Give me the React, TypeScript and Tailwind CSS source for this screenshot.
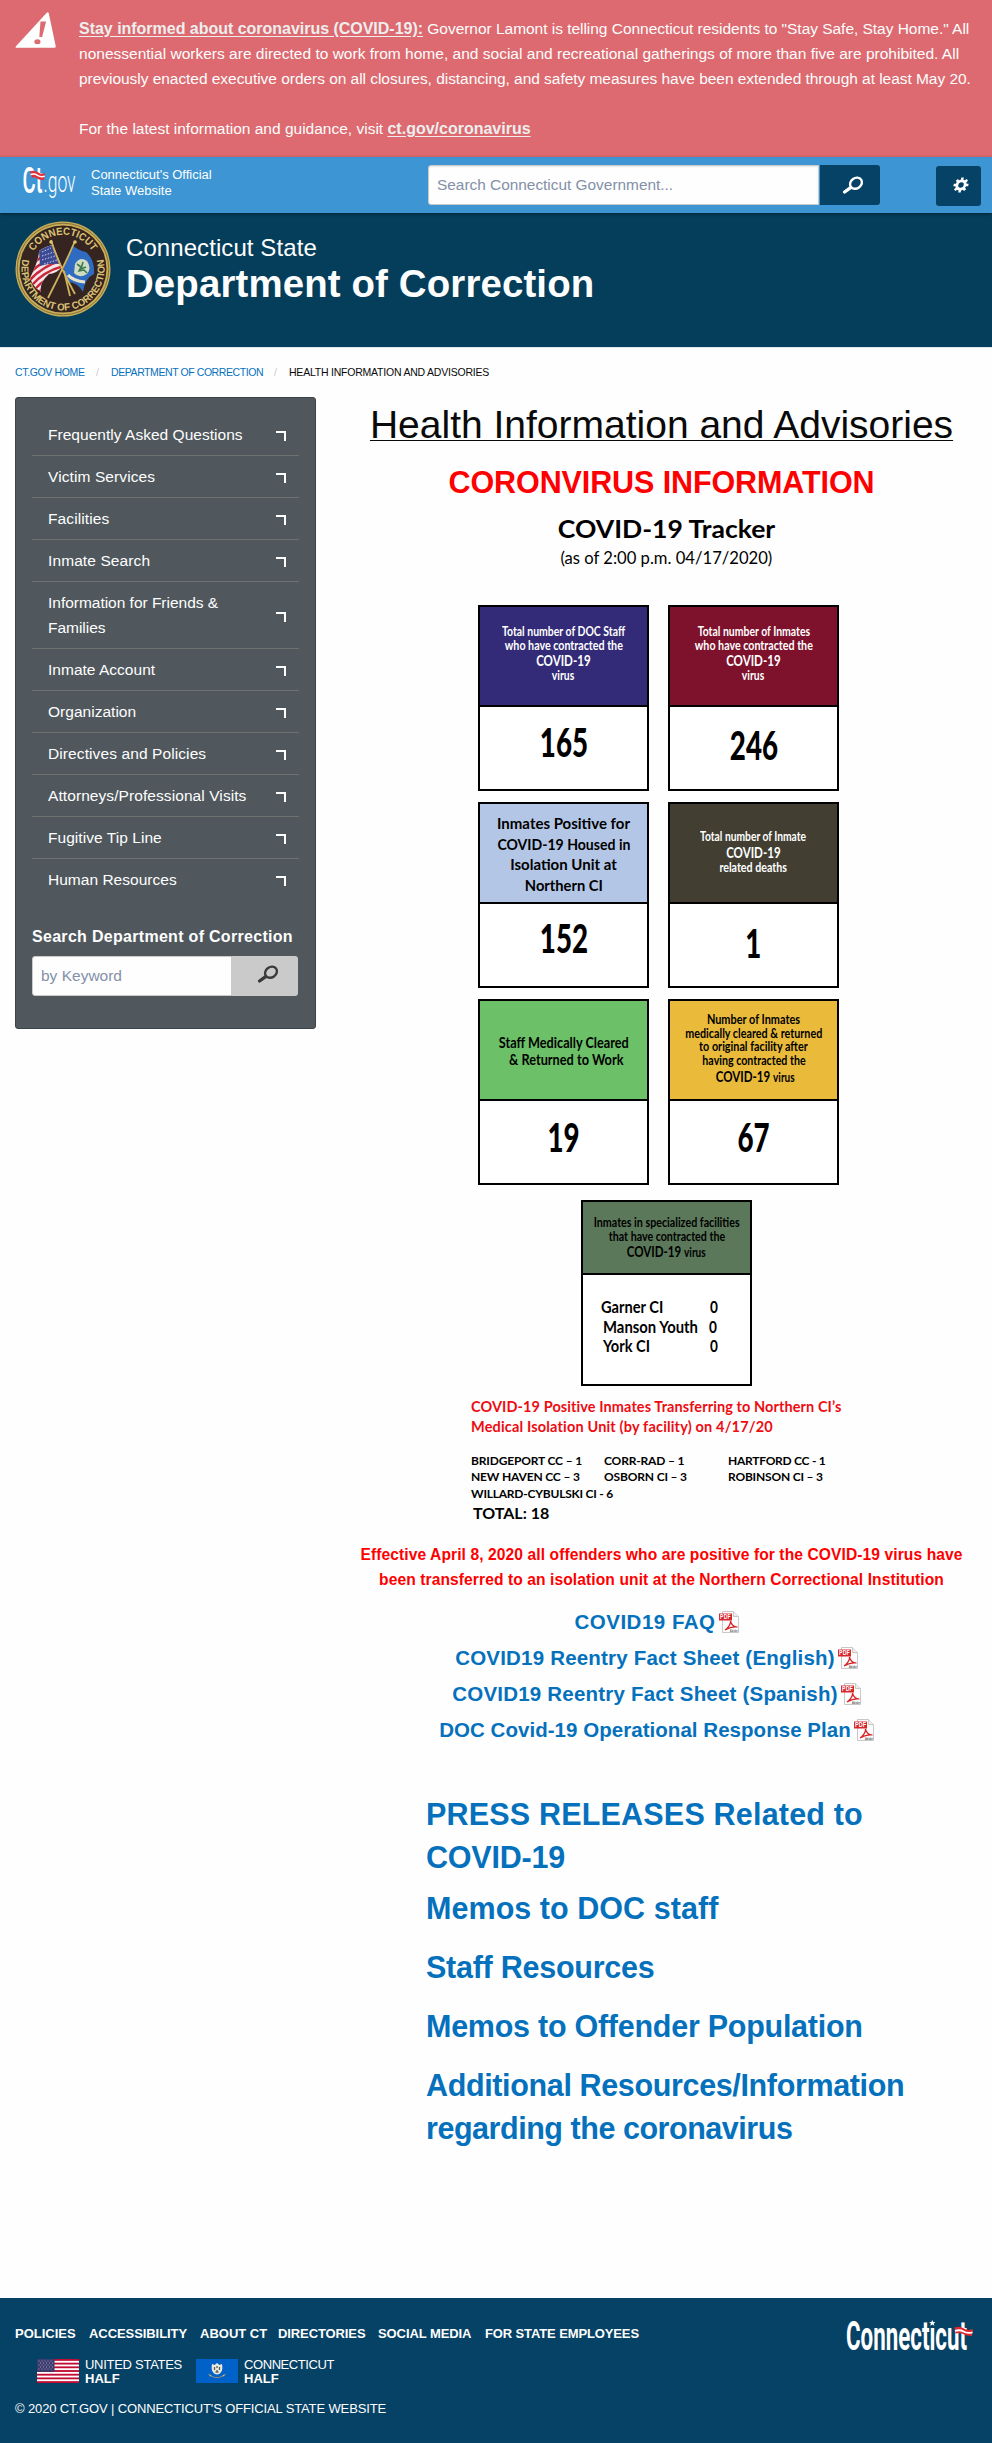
import type { ReactNode } from "react";

const sidebarItems: { label: ReactNode; tracking: string }[] = [
  { label: "Frequently Asked Questions", tracking: "tracking-[0.03px]" },
  { label: "Victim Services", tracking: "tracking-[0.1px]" },
  { label: "Facilities", tracking: "tracking-[0.1px]" },
  { label: "Inmate Search", tracking: "tracking-[0.1px]" },
  { label: <>Information for Friends &amp;<br />Families</>, tracking: "tracking-[-0.02px]" },
  { label: "Inmate Account", tracking: "tracking-[0.02px]" },
  { label: "Organization", tracking: "tracking-[0.02px]" },
  { label: "Directives and Policies", tracking: "tracking-[0.1px]" },
  { label: "Attorneys/Professional Visits", tracking: "tracking-[0.08px]" },
  { label: "Fugitive Tip Line", tracking: "tracking-[0.05px]" },
  { label: "Human Resources", tracking: "tracking-[0.02px]" },
];

function WarningIcon() {
  return (
    <svg width="42" height="37" viewBox="0 0 42 37" className="block">
      <path d="M32 0.5q1.4-.7 1.8 1l6.9 32.5q.3 1.8-1.5 1.8H1.6q-1.8-.2-.4-1.8z" fill="#fff" />
      <path d="M25.5 9.500h5.600l-4 15.400h-2.800z" fill="#dc6a70" />
      <ellipse cx="22.4" cy="29.8" rx="3.1" ry="2.5" fill="#dc6a70" />
    </svg>
  );
}

function SearchIcon({ color }: { color: string }) {
  return (
    <svg width="22" height="18" viewBox="0 0 22 18" className="block">
      <ellipse cx="14" cy="7.2" rx="6.3" ry="5.2" transform="rotate(-35 14 7.2)" fill="none" stroke={color} strokeWidth="2.4" />
      <path d="M8.600 11.600L2.600 16" stroke={color} strokeWidth="3.3" strokeLinecap="round" />
    </svg>
  );
}

function GearIcon() {
  return (
    <svg width="18" height="16" viewBox="0 0 18 16" className="block">
      <g transform="translate(9 8) skewX(-12)" stroke="#fff">
        <circle r="4.1" fill="none" strokeWidth="2.8" />
        {[0, 45, 90, 135, 180, 225, 270, 315].map((a) => (
          <path key={a} d="M0-4.600V-7.400" strokeWidth="2.5" transform={`rotate(${a})`} />
        ))}
      </g>
    </svg>
  );
}

function CtGovLogo() {
  return (
    <svg width="60" height="42" viewBox="-3 -4 60 42" className="block">
      <g fontFamily="Roboto, sans-serif" fill="#fff">
        <text x="-0.5" y="27" fontSize="36" fontWeight="500" textLength="20" lengthAdjust="spacingAndGlyphs">Ct</text>
        <text x="20.5" y="26" fontSize="29" fontWeight="300" textLength="32" lengthAdjust="spacingAndGlyphs">.gov</text>
      </g>
      <path d="M7 5.500q4-2 8 .7t7 .8l-1 7q-4 .5-7-1.500t-5-.5z" fill="#e0303a" />
      <path d="M7.500 8.500q4-1.200 7 .8t7.200 1" fill="none" stroke="#fff" strokeWidth="1.500" />
    </svg>
  );
}

function DepartmentSeal() {
  return (
    <svg width="96" height="96" viewBox="0 0 96 96" className="block">
      <defs>
        <path id="sealTop" d="M13.800 48a34.200 34.200 0 0 1 68.400 0" />
        <path id="sealBottom" d="M9 33.800a41.500 41.500 0 1 0 78 0" />
        <clipPath id="sealUs"><path d="M15 57Q24 39 24 30q7-5 14-6l9 22q-6 7-13 7-10 9-8 18-8-5-11-14z" /></clipPath>
      </defs>
      <circle cx="48" cy="48" r="47.500" fill="#c9ae58" />
      <circle cx="48" cy="48" r="45.800" fill="none" stroke="#86703a" strokeWidth="1" />
      <circle cx="48" cy="48" r="43.500" fill="#35241f" />
      <g fill="#dcc374" fontFamily="Liberation Sans, Arial, sans-serif" fontWeight="700">
        <text fontSize="10.500" textAnchor="middle" textLength="70" lengthAdjust="spacingAndGlyphs"><textPath href="#sealTop" startOffset="50%">CONNECTICUT</textPath></text>
        <text fontSize="10" textAnchor="middle" textLength="150" lengthAdjust="spacingAndGlyphs"><textPath href="#sealBottom" startOffset="50%">DEPARTMENT OF CORRECTION</textPath></text>
      </g>
      <g clipPath="url(#sealUs)">
        <rect x="12" y="20" width="40" height="56" fill="#f2e6e6" />
        {[0, 1, 2, 3, 4, 5, 6].map((i) => (
          <path key={i} d={`M${10 + i * 2} ${50 + i * 5}Q${26 + i * 2} ${32 + i * 5} ${52 + i} ${26 + i * 6}`} fill="none" stroke="#c9283c" strokeWidth="2.500" />
        ))}
        <path d="M24 30q7-5 14-6l6 19q-9-1-19 2z" fill="#3c4a94" />
        <path d="M27 31l9-4M27 35l12-4M27 39l13-4M29 43l13-4" stroke="#cfd3ea" strokeWidth="1" strokeDasharray="1.500 1.500" />
      </g>
      <path d="M58 25q7 5 13 6 9 8 8 22-9 4-11 18-5-9-14-10-5-1-5-15z" fill="#2f6bc0" />
      <path d="M60 43q5-8 12-3 5 7 0 13-8 5-13-1z" fill="#cfdcc0" />
      <path d="M62 43l4 3-2 4 5-1 3 3M68 41l-2 7 5-2" stroke="#3d7a50" strokeWidth="1.600" fill="none" />
      <path d="M53 54q5 6 17 7" stroke="#e6e2ce" strokeWidth="3" fill="none" />
      <path d="M36 19q7 23 24 54M60 20Q47 50 33 77M49 50l6 25" stroke="#cfb25b" strokeWidth="1.800" fill="none" />
      <circle cx="36" cy="21" r="1.800" fill="#dcc374" />
      <circle cx="60" cy="21" r="1.800" fill="#dcc374" />
    </svg>
  );
}

function PdfIcon() {
  return (
    <svg width="20" height="22" viewBox="0 0 20 22" className="ml-[3px] block shrink-0">
      <path d="M3.500.5h11l5 5v16h-16z" fill="#fcfcfc" stroke="#c8c8c8" />
      <path d="M14.500.5v5h5" fill="#eee" stroke="#c8c8c8" />
      <rect y="2.500" width="13" height="7" fill="#d6262c" />
      <text x="1" y="8.300" fontSize="6.300" fontWeight="700" fill="#fff" fontFamily="Liberation Sans, Arial, sans-serif" textLength="11" lengthAdjust="spacingAndGlyphs">PDF</text>
      <path d="M6 19c3-2 6-6 5.500-9 1 4 4 6 7 6-4-.800-9 1-12.500 3z" fill="none" stroke="#d6262c" strokeWidth="1.200" />
      <text x="11" y="21" fontSize="4" fill="#555" fontFamily="Liberation Sans, Arial, sans-serif" textLength="8" lengthAdjust="spacingAndGlyphs">Adobe</text>
    </svg>
  );
}

function UsFlag() {
  return (
    <svg width="42" height="24" viewBox="0 0 42 24" className="block">
      <rect width="42" height="24" fill="#fff" />
      {[0, 1, 2, 3, 4, 5, 6].map((i) => (
        <rect key={i} y={i * 3.692} width="42" height="1.846" fill="#c20a32" />
      ))}
      <rect width="17.500" height="12.900" fill="#3c3b6e" />
      <path d="M1.500 2h15M3 4h13M1.500 6h15M3 8h13M1.500 10h15" stroke="#a9a8c6" strokeWidth=".9" strokeDasharray="1 2" />
    </svg>
  );
}

function CtFlag() {
  return (
    <svg width="42" height="24" viewBox="0 0 42 24" className="block">
      <rect width="42" height="24" fill="#0062c8" />
      <path d="M16 5l2.500 1 2.500-2 2.500 2 2.500-1q1 5-.8 8-1.700 2.500-4.200 2.500t-4.200-2.500q-1.800-3-.8-8z" fill="#e9e8df" />
      <path d="M18.500 8v3m2.500-4v2m2.500-1v3m-4 2h3m-1.500-2v2" stroke="#5b6450" strokeWidth="1.300" />
      <path d="M12 15q3.500.6 4.500 2.600 4.500 1.400 9 0 1-2 4.500-2.600-2 2.600-4 2.800-5 2.200-10 0-2-.2-4-2.800z" fill="#ddd9b8" stroke="#6b6a58" strokeWidth=".4" />
    </svg>
  );
}

function ConnecticutLogo() {
  return (
    <svg width="134" height="44" viewBox="-3 -5 134 44" className="block">
      <text x="0" y="30" fontSize="40" fontWeight="700" fill="#fff" fontFamily="Roboto, sans-serif" textLength="121" lengthAdjust="spacingAndGlyphs">Connecticut</text>
      <rect x="82.500" y="-1" width="7.500" height="7.500" fill="#064265" />
      <path d="M86.300 0l.9 2h2.200l-1.700 1.500.7 2.200-2.100-1.300-2.100 1.300.7-2.200L83.200 2h2.200z" fill="#fff" />
      <path d="M108.500 7.500q5-2 9 .8t9.500.7l-1 7q-5 .2-8.500-1.800t-8-.7z" fill="#e0262f" />
      <path d="M109 10.800q5-1.500 8.500.7t9 .8" fill="none" stroke="#fff" strokeWidth="1.900" />
    </svg>
  );
}

/* One centred caption line, condensed horizontally. */
function Line({ className, children }: { className: string; children: ReactNode }) {
  return (
    <div className="flex justify-center whitespace-nowrap">
      <span className={`block ${className}`}>{children}</span>
    </div>
  );
}

const small = "text-[13px] leading-[13.7px]";
const covid = "text-[15px] leading-[17px] scale-x-[0.77]";

function StatCard({ header, value, valueClass, children }: { header: string; value: string; valueClass: string; children: ReactNode }) {
  return (
    <div className="h-[186px] w-[171px] border-2 border-black bg-white">
      <div className={`h-[100px] border-b-2 border-black ${header}`}>{children}</div>
      <div className={`flex justify-center ${valueClass}`}>
        <span className="block scale-x-[0.71] text-[39px] leading-[40px] font-black">{value}</span>
      </div>
    </div>
  );
}

function Tracker() {
  return (
    <section className="font-['Lato',sans-serif] font-bold text-black">
      <div className="ml-[10px] flex flex-col items-center whitespace-nowrap">
        <h3 className="mt-[9px] scale-x-[1.04] text-[25.5px] leading-[30px]">COVID-19 Tracker</h3>
        <p className="mt-[3px] scale-x-[0.978] text-[17px] leading-[24px] font-normal">(as of 2:00 p.m. 04/17/2020)</p>
      </div>
      <div className="mt-[35px] ml-[132px] grid grid-cols-[171px_171px] gap-x-[19px] gap-y-[11px]">
        <StatCard header="bg-[#332b77] pt-[18px] text-white" value="165" valueClass="pt-[15px]">
          <Line className={`${small} scale-x-[0.804]`}>Total number of DOC Staff</Line>
          <Line className={`${small} scale-x-[0.822]`}>who have contracted the</Line>
          <Line className={covid}>COVID-19</Line>
          <Line className={`${small} scale-x-[0.8]`}>virus</Line>
        </StatCard>
        <StatCard header="bg-[#7e112b] pt-[18px] text-white" value="246" valueClass="pt-[18px]">
          <Line className={`${small} scale-x-[0.804]`}>Total number of Inmates</Line>
          <Line className={`${small} scale-x-[0.822]`}>who have contracted the</Line>
          <Line className={covid}>COVID-19</Line>
          <Line className={`${small} scale-x-[0.8]`}>virus</Line>
        </StatCard>
        <StatCard header="bg-[#b4c6e5] pt-[9px]" value="152" valueClass="pt-[14px]">
          <Line className="text-[15px] leading-[20.5px]">Inmates Positive for</Line>
          <Line className="scale-x-[0.938] text-[15px] leading-[20.5px]">COVID-19 Housed in</Line>
          <Line className="text-[15px] leading-[20.5px]">Isolation Unit at</Line>
          <Line className="scale-x-[0.98] text-[15px] leading-[20.5px]">Northern CI</Line>
        </StatCard>
        <StatCard header="bg-[#423f32] pt-[26px] text-white" value="1" valueClass="pt-[19px]">
          <Line className={`${small} scale-x-[0.79]`}>Total number of Inmate</Line>
          <Line className={covid}>COVID-19</Line>
          <Line className={`${small} scale-x-[0.82]`}>related deaths</Line>
        </StatCard>
        <StatCard header="bg-[#6bc068] pt-[33px]" value="19" valueClass="pt-[16px]">
          <Line className="scale-x-[0.847] text-[15px] leading-[16.5px]">Staff Medically Cleared</Line>
          <Line className="ml-[6px] scale-x-[0.85] text-[15px] leading-[16.5px]">&amp; Returned to Work</Line>
        </StatCard>
        <StatCard header="bg-[#eabb3a] pt-[12px]" value="67" valueClass="pt-[16px]">
          <Line className={`${small} scale-x-[0.84]`}>Number of Inmates</Line>
          <Line className={`${small} scale-x-[0.828]`}>medically cleared &amp; returned</Line>
          <Line className={`${small} scale-x-[0.83]`}>to original facility after</Line>
          <Line className={`${small} scale-x-[0.82]`}>having contracted the</Line>
          <Line className={`${covid} ml-[4px]`}>COVID-19 <span className="text-[13px]">virus</span></Line>
        </StatCard>
      </div>
      <div className="mt-[15px] ml-[235px] h-[186px] w-[171px] border-2 border-black bg-white">
        <div className="h-[73px] border-b-2 border-black bg-[#5b795a] pt-[14px]">
          <Line className={`${small} scale-x-[0.823]`}>Inmates in specialized facilities</Line>
          <Line className={`${small} scale-x-[0.82]`}>that have contracted the</Line>
          <Line className={covid}>COVID-19 <span className="text-[13px]">virus</span></Line>
        </div>
        <div className="grid grid-cols-[109px_20px] pt-[22px] pl-[18px] text-[17px] leading-[19.5px] whitespace-nowrap">
          <span className="origin-left scale-x-[0.86]">Garner CI</span><span className="origin-left scale-x-[0.8]">0</span>
          <span className="ml-[2px] origin-left scale-x-[0.874]">Manson Youth</span><span className="-ml-px origin-left scale-x-[0.8]">0</span>
          <span className="ml-[2px] origin-left scale-x-[0.86]">York CI</span><span className="origin-left scale-x-[0.8]">0</span>
        </div>
      </div>
      <div className="mt-[11px] ml-[125px] w-[400px] whitespace-nowrap">
        <p className="text-[14.5px] leading-[20px] tracking-[0.09px] text-[#ee0c12]">COVID-19 Positive Inmates Transferring to Northern CI’s</p>
        <p className="text-[14.5px] leading-[20px] tracking-[0.17px] text-[#ee0c12]">Medical Isolation Unit (by facility) on 4/17/20</p>
        <div className="mt-[16px] grid grid-cols-[133px_124px_110px] text-[12px] leading-[16.4px]">
          <span className="tracking-[-0.16px]">BRIDGEPORT CC – 1</span><span className="tracking-[-0.16px]">CORR-RAD – 1</span><span className="tracking-[-0.26px]">HARTFORD CC - 1</span>
          <span className="tracking-[-0.16px]">NEW HAVEN CC – 3</span><span className="tracking-[-0.16px]">OSBORN CI – 3</span><span className="tracking-[-0.2px]">ROBINSON CI – 3</span>
          <span className="tracking-[-0.22px]">WILLARD-CYBULSKI CI - 6</span>
        </div>
        <p className="mt-px ml-[2px] text-[16px] leading-[20px]">TOTAL: 18</p>
      </div>
    </section>
  );
}

export default function App() {
  return (
    <div className="flex h-[2443px] w-[992px] flex-col overflow-hidden bg-[#fefefe] font-['Liberation_Sans',Arial,sans-serif] text-[#0a0a0a]">
      <aside className="flex h-[157px] shrink-0 bg-[#dc6a70] text-[15.5px] leading-[25px] whitespace-nowrap text-[#fefefe]">
        <div className="w-[79px] shrink-0 pt-[12px] pl-[15px]"><WarningIcon /></div>
        <div className="pt-[16px]">
          <p>
            <a className="text-[16px] font-bold tracking-[-0.022px] text-[#eeeeee] underline underline-offset-2">Stay informed about coronavirus (COVID-19):</a>{" "}
            <span className="tracking-[-0.03px]">Governor Lamont is telling Connecticut residents to "Stay Safe, Stay Home." All</span>
            <br /><span className="tracking-[0.01px]">nonessential workers are directed to work from home, and social and recreational gatherings of more than five are prohibited. All</span>
            <br /><span className="tracking-[-0.04px]">previously enacted executive orders on all closures, distancing, and safety measures have been extended through at least May 20.</span>
          </p>
          <p className="mt-[25px]">For the latest information and guidance, visit <a className="text-[16px] font-bold text-[#eeeeee] underline underline-offset-2">ct.gov/coronavirus</a></p>
        </div>
      </aside>

      <header className="relative flex h-[56px] shrink-0 bg-[#3d95d3] text-[#fefefe] shadow-[0_1px_3px_rgba(0,0,0,0.45)]">
        <div className="w-[91px] pt-[5px] pl-[20px]"><CtGovLogo /></div>
        <p className="w-[337px] pt-[10px] text-[13px] leading-[16px]">Connecticut's Official<br />State Website</p>
        <div className="mt-[8px] flex h-[40px]">
          <div className="flex w-[391px] items-center rounded-l-[3px] border border-[#cacaca] bg-[#fefefe] pl-[8px] text-[15.4px] text-[#8390a8] shadow-[inset_0_1px_2px_rgba(10,10,10,0.1)]">Search Connecticut Government...</div>
          <button className="ml-px flex w-[60px] items-center justify-center rounded-r-[3px] bg-[#064265] pl-[5px]"><SearchIcon color="#fff" /></button>
        </div>
        <button className="mt-[9px] ml-[56px] flex h-[40px] w-[45px] items-center justify-center rounded-[3px] bg-[#064265] pb-[2px] pl-[4px]"><GearIcon /></button>
      </header>

      <div className="flex h-[135px] shrink-0 border-b border-[#e0e4e6] bg-[#053e5b] text-[#fefefe]">
        <div className="w-[126px] pt-[8px] pl-[15px]"><DepartmentSeal /></div>
        <div className="pt-[20px]">
          <p className="text-[24px] leading-[30px] tracking-[0.08px]">Connecticut State</p>
          <h1 className="mt-px text-[38.4px] leading-[40px] font-bold tracking-[0.14px]">Department of Correction</h1>
        </div>
      </div>

      <nav className="flex h-[49px] shrink-0 pt-[14px] pl-[15px] text-[10.5px] leading-[20px] whitespace-nowrap text-[#0571bd]">
        <a className="w-[81px] tracking-[-0.35px]">CT.GOV HOME</a>
        <span className="w-[15px] text-[#cacaca]">/</span>
        <a className="w-[163px] tracking-[-0.42px]">DEPARTMENT OF CORRECTION</a>
        <span className="w-[15px] text-[#cacaca]">/</span>
        <span className="tracking-[-0.22px] text-[#0a0a0a]">HEALTH INFORMATION AND ADVISORIES</span>
      </nav>

      <div className="flex grow">
        <div className="w-[346px] shrink-0 pl-[15px]">
          <div className="h-[632px] w-[301px] rounded-[3px] border border-[#3b4448] bg-[#50585d] px-[16px] pt-[16px] text-[#fefefe]">
            <ul>
              {sidebarItems.map((item, i) => (
                <li key={i} className="flex items-center justify-between border-b border-[#6d7270] py-[8px] pr-[13px] pl-[16px] last:border-b-0">
                  <a className={`text-[15.5px] leading-[25px] whitespace-nowrap ${item.tracking}`}>{item.label}</a>
                  <span className="mt-[3px] block size-[10px] border-t-2 border-r-2 border-white" />
                </li>
              ))}
            </ul>
            <h2 className="mt-[24px] text-[16px] leading-[25px] font-bold tracking-[0.3px] whitespace-nowrap">Search Department of Correction</h2>
            <div className="mt-[7px] flex h-[40px] w-[266px]">
              <div className="flex w-[200px] items-center rounded-l-[3px] border border-[#cacaca] bg-[#fefefe] pl-[8px] text-[15.5px] text-[#8390a8]">by Keyword</div>
              <button className="flex w-[66px] items-center justify-center rounded-r-[3px] bg-[#cacaca] pb-[4px] pl-[6px]"><SearchIcon color="#3a3a3a" /></button>
            </div>
          </div>
        </div>

        <main className="w-[631px] shrink-0">
          <h1 className="text-center text-[39px] leading-[55px] whitespace-nowrap underline decoration-1 underline-offset-[2px]">Health Information and Advisories</h1>
          <h2 className="mt-[9px] text-center text-[30.5px] leading-[43px] font-bold tracking-[-0.1px] whitespace-nowrap text-[#ff0000]">CORONVIRUS INFORMATION</h2>
          <Tracker />
          <p className="mt-[19px] text-center text-[15.6px] leading-[25px] font-bold tracking-[0.09px] whitespace-nowrap text-[#ff0000]">
            Effective April 8, 2020 all offenders who are positive for the COVID-19 virus have<br />
            been transferred to an isolation unit at the Northern Correctional Institution
          </p>
          <div className="mt-[12px] -ml-[10px] text-[20.5px] leading-[36px] font-bold whitespace-nowrap text-[#0571bd]">
            <a className="flex items-center justify-center tracking-[0.5px]">COVID19 FAQ<PdfIcon /></a>
            <a className="flex items-center justify-center tracking-[0.2px]">COVID19 Reentry Fact Sheet (English)<PdfIcon /></a>
            <a className="flex items-center justify-center tracking-[0.2px]">COVID19 Reentry Fact Sheet (Spanish)<PdfIcon /></a>
            <a className="flex items-center justify-center tracking-[0.04px]">DOC Covid-19 Operational Response Plan<PdfIcon /></a>
          </div>
          <div className="mt-[45px] ml-[80px] flex flex-col text-[30.5px] leading-[43px] font-bold whitespace-nowrap text-[#0571bd]">
            <a className="tracking-[0.19px]">PRESS RELEASES Related to<br /><span className="tracking-[-0.2px]">COVID-19</span></a>
            <a className="mt-[8px] tracking-[0.05px]">Memos to DOC staff</a>
            <a className="mt-[16px] tracking-[-0.25px]">Staff Resources</a>
            <a className="mt-[16px] tracking-[-0.26px]">Memos to Offender Population</a>
            <a className="mt-[16px]"><span className="tracking-[-0.36px]">Additional Resources/Information</span><br /><span className="tracking-[-0.46px]">regarding the coronavirus</span></a>
          </div>
        </main>
      </div>

      <footer className="flex h-[145px] shrink-0 bg-[#064265] pl-[15px] text-[13px] leading-[14px] whitespace-nowrap text-[#fefefe]">
        <div className="w-[828px] pt-[26px]">
          <nav className="flex leading-[20px] font-bold">
            <a className="w-[74px]">POLICIES</a>
            <a className="w-[111px] tracking-[-0.07px]">ACCESSIBILITY</a>
            <a className="w-[78px]">ABOUT CT</a>
            <a className="w-[100px] tracking-[-0.1px]">DIRECTORIES</a>
            <a className="w-[107px] tracking-[-0.08px]">SOCIAL MEDIA</a>
            <a className="tracking-[-0.12px]">FOR STATE EMPLOYEES</a>
          </nav>
          <div className="mt-[15px] ml-[22px] flex">
            <UsFlag />
            <p className="-mt-px ml-[6px] w-[111px] tracking-[-0.28px]">UNITED STATES<br /><b className="tracking-normal">HALF</b></p>
            <CtFlag />
            <p className="-mt-px ml-[6px] tracking-[-0.42px]">CONNECTICUT<br /><b className="tracking-normal">HALF</b></p>
          </div>
          <p className="mt-[13px] leading-[20px] tracking-[-0.13px]">© 2020 CT.GOV | CONNECTICUT'S OFFICIAL STATE WEBSITE</p>
        </div>
        <div className="pt-[17px]"><ConnecticutLogo /></div>
      </footer>
    </div>
  );
}
